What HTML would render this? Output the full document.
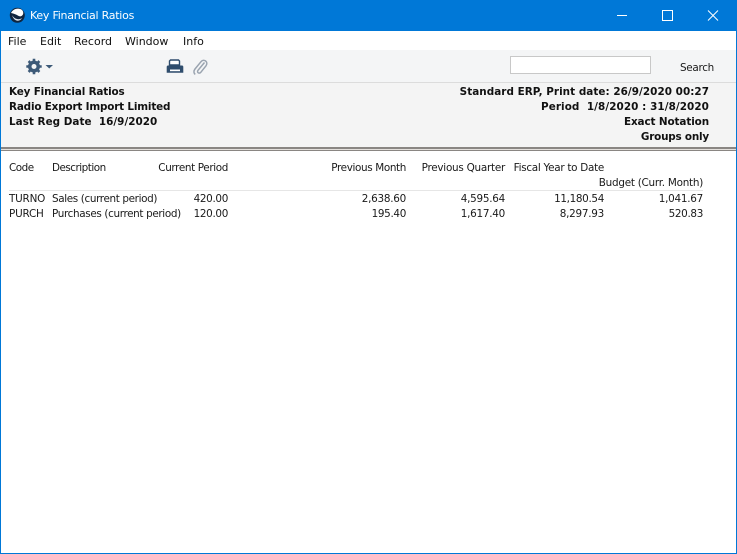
<!DOCTYPE html>
<html><head><meta charset="utf-8"><style>
html,body{margin:0;padding:0;background:#fff}
#w{position:relative;width:737px;height:554px;overflow:hidden;background:#fff;font-family:"DejaVu Sans","Liberation Sans",sans-serif;font-size:10.4px;color:#1a1a1a;letter-spacing:-.33px}
#w div{position:absolute}
.t{white-space:nowrap;line-height:14px;height:14px}
.r{text-align:right}
.b{font-weight:bold;color:#111;font-size:10.4px;letter-spacing:-.1px}
.m{font-size:11px;color:#111;top:35px;letter-spacing:0}
</style></head><body><div id="w">
<div style="left:0;top:0;width:737px;height:31px;background:#0078d7"></div>
<div style="left:0;top:31px;width:737px;height:19px;background:#fff"></div>
<div style="left:0;top:50px;width:737px;height:32px;background:#f4f5f6"></div>
<div style="left:0;top:82px;width:737px;height:1px;background:#dcdcdc"></div>
<div style="left:0;top:83px;width:737px;height:64px;background:#f4f4f4"></div>
<div style="left:0;top:147px;width:737px;height:2px;background:#8a8683"></div>
<div style="left:0;top:149px;width:737px;height:1px;background:#e4e0dc"></div>
<div style="left:0;top:150px;width:737px;height:1px;background:#8a8683"></div>
<div style="left:9px;top:190px;width:694px;height:1px;background:#e6e6e6"></div>

<svg style="position:absolute;left:9px;top:7px" width="17" height="17" viewBox="0 0 17 17"><circle cx="8.3" cy="8.3" r="7.5" fill="#10253f"/><path d="M2 6C4 1.500 10 .5 13 3c2 2 1.500 5-.5 6-1 .6-2.500.3-3.500-.4C7 7.500 5 6.500 2 6z" fill="#fff"/><path d="M3 8c2 4 7 5.500 10 3-2 4-8 4-10-3z" fill="#dfe6ee"/></svg>
<div class="t" style="left:30px;top:9px;font-size:11px;color:#fff;letter-spacing:-.25px">Key Financial Ratios</div>

<svg style="position:absolute;left:610px;top:0" width="127" height="31" viewBox="0 0 127 31" fill="none" stroke="#fff" stroke-width="1"><path d="M7 15.500H17"/><path d="M52.500 10.500h10v10h-10z"/><path d="M98 10.500l10 10M108 10.500l-10 10"/></svg>

<div class="t m" style="left:8px">File</div>
<div class="t m" style="left:40px">Edit</div>
<div class="t m" style="left:74px">Record</div>
<div class="t m" style="left:125px">Window</div>
<div class="t m" style="left:183px">Info</div>

<svg style="position:absolute;left:26px;top:58px" width="28" height="18" viewBox="0 0 28 18"><g fill="#3d5a78"><circle cx="8" cy="8.500" r="6"/><g stroke="#3d5a78" stroke-width="2.600"><path d="M8 .8v15.400M.3 8.500h15.400M2.600 3.100l10.800 10.800M13.400 3.100L2.600 13.900"/></g></g><circle cx="8" cy="8.500" r="2.500" fill="#f4f5f6"/><path d="M19.500 7h7.500l-3.750 3.500z" fill="#3d5a78"/></svg>
<svg style="position:absolute;left:166px;top:59px" width="18" height="16" viewBox="0 0 18 16"><path d="M4.500 1h8l1 1v4h-10V2z" fill="#fff" stroke="#2f4d6d" stroke-width="1.400"/><path d="M1.500 6.500h15l.8 1v6.300H.7V7.500z" fill="#2f4d6d"/><path d="M4 10.500h10v1.700H4z" fill="#fff"/></svg>
<svg style="position:absolute;left:192px;top:58px" width="16" height="18" viewBox="0 0 16 18" fill="none"><path d="M12.500 4.500L6 12.300c-1 1.300-.2 2.300.5 2.700.9.400 1.700 0 2.400-.8L14 7.800c1.300-1.800 1-3.700-.4-4.800-1.400-1.100-3.300-.8-4.600.7L3 11c-1.700 2.300-1.200 4.300.3 5.400" stroke="#9aa4b0" stroke-width="1.500"/></svg>

<div style="left:510px;top:56px;width:139px;height:16px;background:#fff;border:1px solid #c8c8c8"></div>
<div class="t" style="left:680px;top:61px;letter-spacing:-.3px">Search</div>

<div class="t b" style="left:9px;top:85px;letter-spacing:-.15px">Key Financial Ratios</div>
<div class="t b" style="left:9px;top:100px;letter-spacing:-.17px">Radio Export Import Limited</div>
<div class="t b" style="left:9px;top:115px;white-space:pre;letter-spacing:.03px">Last Reg Date  16/9/2020</div>
<div class="t b r" style="right:28px;top:85px;letter-spacing:.05px">Standard ERP, Print date: 26/9/2020 00:27</div>
<div class="t b r" style="right:28px;top:100px;white-space:pre;letter-spacing:.08px">Period  1/8/2020 : 31/8/2020</div>
<div class="t b r" style="right:28px;top:115px">Exact Notation</div>
<div class="t b r" style="right:28px;top:130px;letter-spacing:-.2px">Groups only</div>

<div class="t" style="left:9px;top:161px;letter-spacing:-.5px">Code</div>
<div class="t" style="left:52px;top:161px;letter-spacing:-.5px">Description</div>
<div class="t r" style="right:509px;top:161px;letter-spacing:-.36px">Current Period</div>
<div class="t r" style="right:331px;top:161px;letter-spacing:-.36px">Previous Month</div>
<div class="t r" style="right:232px;top:161px;letter-spacing:-.25px">Previous Quarter</div>
<div class="t r" style="right:133px;top:161px;letter-spacing:-.28px">Fiscal Year to Date</div>
<div class="t r" style="right:34px;top:176px;letter-spacing:-.25px">Budget (Curr. Month)</div>

<div class="t" style="left:9px;top:192px;letter-spacing:-.2px">TURNO</div>
<div class="t" style="left:52px;top:192px;letter-spacing:-.36px">Sales (current period)</div>
<div class="t r" style="right:509px;top:192px">420.00</div>
<div class="t r" style="right:331px;top:192px;letter-spacing:-.25px">2,638.60</div>
<div class="t r" style="right:232px;top:192px;letter-spacing:-.25px">4,595.64</div>
<div class="t r" style="right:133px;top:192px">11,180.54</div>
<div class="t r" style="right:34px;top:192px;letter-spacing:-.25px">1,041.67</div>

<div class="t" style="left:9px;top:207px;letter-spacing:-.2px">PURCH</div>
<div class="t" style="left:52px;top:207px;letter-spacing:-.35px">Purchases (current period)</div>
<div class="t r" style="right:509px;top:207px">120.00</div>
<div class="t r" style="right:331px;top:207px">195.40</div>
<div class="t r" style="right:232px;top:207px;letter-spacing:-.25px">1,617.40</div>
<div class="t r" style="right:133px;top:207px;letter-spacing:-.25px">8,297.93</div>
<div class="t r" style="right:34px;top:207px">520.83</div>

<div style="left:0;top:31px;width:1px;height:522px;background:#0078d7"></div>
<div style="right:0;top:31px;width:1px;height:522px;background:#0078d7"></div>
<div style="left:0;top:553px;width:737px;height:1px;background:#0078d7"></div>
</div></body></html>
